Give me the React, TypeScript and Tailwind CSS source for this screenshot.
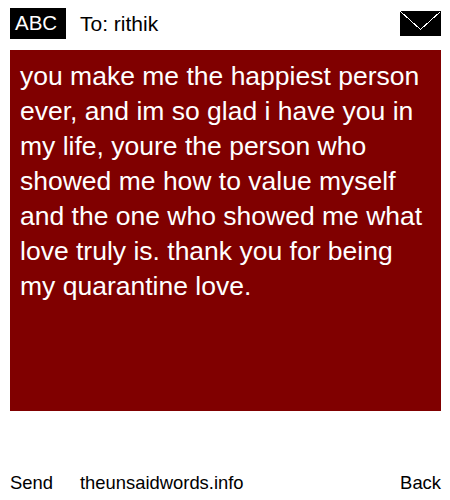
export default function App() {
  return (
    <div className="w-[450px] h-[500px] bg-white text-black flex flex-col font-['Liberation_Sans',Arial,sans-serif]">
      {/* header */}
      <div className="h-[50px] pl-[10px] pr-[9px] pb-[11px] pt-[8px] flex items-center">
        <div className="w-[56px] h-[31px] bg-black text-white text-[20.5px] pl-[5px] flex items-center">ABC</div>
        <div className="ml-[14px] text-[21px]">To: rithik</div>
        <svg className="ml-auto" width="41" height="25" viewBox="0 0 41 25" shapeRendering="crispEdges">
          <rect width="41" height="25" fill="#000" />
          <path d="M0.5 0.5 L20.5 18.5 L40.5 0.5" fill="none" stroke="#fff" strokeWidth="1" />
        </svg>
      </div>

      {/* message */}
      <div className="ml-[10px] w-[431px] h-[361px] bg-[#800000] text-white text-[26.5px] leading-[35px] px-[10px] py-[9px]">
        you make me the happiest person ever, and im so glad i have you in my life, youre the person who showed me how to value myself and the one who showed me what love truly is. thank you for being my quarantine love.
      </div>

      {/* footer */}
      <div className="mt-[60px] pl-[10px] pr-[9px] flex text-[18.4px] leading-[24px]">
        <div className="w-[70px]">Send</div>
        <div>theunsaidwords.info</div>
        <div className="ml-auto">Back</div>
      </div>
    </div>
  );
}
